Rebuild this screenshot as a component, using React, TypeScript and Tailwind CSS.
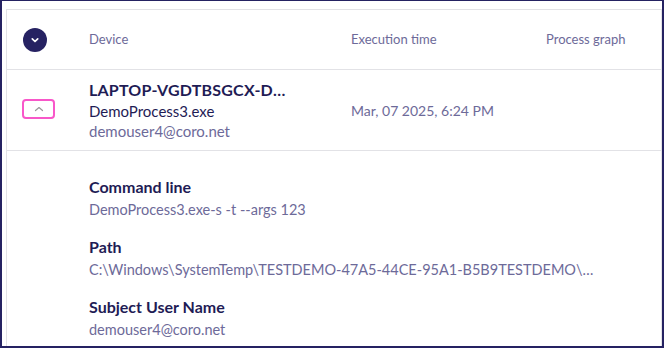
import React from "react";

const font = { fontFamily: "Lato, 'Noto Sans', sans-serif" };

export default function App() {
  return (
    <div
      className="w-[664px] h-[348px] overflow-hidden bg-white border-t border-l-2 border-r-2 border-b-2 border-[#252262] pl-[4px] pt-[8px]"
      style={font}
    >
      <div className="w-[656px] h-[400px] border border-[#e2e2e6]">
        {/* header */}
        <div className="flex items-center h-[60px] border-b border-[#e2e2e6]">
          <div className="w-[82px] flex pl-[16px] pt-[1px]">
            <div className="w-6 h-6 rounded-full bg-[#262262] flex items-center justify-center">
              <svg width="10" height="10" viewBox="0 0 10 10">
                <path d="M2.3 3.8 L5 6.5 L7.7 3.8" fill="none" stroke="white" strokeWidth="1.7" strokeLinecap="round" strokeLinejoin="round" />
              </svg>
            </div>
          </div>
          <div className="w-[262px] text-[13px] text-[#6d6a99]">Device</div>
          <div className="w-[195px] text-[13px] text-[#6d6a99]">Execution time</div>
          <div className="text-[13px] text-[#6d6a99]">Process graph</div>
        </div>
        {/* row */}
        <div className="flex items-center h-[81px] border-b border-[#e2e2e6]">
          <div className="w-[82px] flex pl-[15px] pb-[2px]">
            <div className="w-[33px] h-[20px] rounded-[4px] border-2 border-[#f857c9] flex items-center justify-center">
              <svg width="12" height="8" viewBox="0 0 12 8">
                <path d="M2.5 5.5 L6 2.5 L9.5 5.5" fill="none" stroke="#9a9a9a" strokeWidth="1.2" strokeLinecap="round" strokeLinejoin="round" />
              </svg>
            </div>
          </div>
          <div className="w-[262px] flex flex-col pr-[64px]">
            <div className="text-[16px] font-bold text-[#1f1c55] truncate leading-[22px] tracking-[0.2px]">LAPTOP-VGDTBSGCX-DESKTOP</div>
            <div className="text-[15px] text-[#1f1c55] leading-[20px]">DemoProcess3.exe</div>
            <div className="text-[15px] text-[#6d6a99] leading-[20px]">demouser4@coro.net</div>
          </div>
          <div className="text-[14px] text-[#6d6a99]">Mar, 07 2025, 6:24 PM</div>
        </div>
        {/* details */}
        <div className="pl-[82px] pt-[25px] flex flex-col gap-[15px]">
          <div className="flex flex-col">
            <div className="text-[16px] font-bold text-[#1f1c55] leading-[22px]">Command line</div>
            <div className="text-[14.5px] text-[#6d6a99] leading-[23px]">DemoProcess3.exe-s -t --args 123</div>
          </div>
          <div className="flex flex-col">
            <div className="text-[16px] font-bold text-[#1f1c55] leading-[22px]">Path</div>
            <div className="w-[506px] text-[14.5px] text-[#6d6a99] leading-[23px] truncate">C:\Windows\SystemTemp\TESTDEMO-47A5-44CE-95A1-B5B9TESTDEMO\DemoProcess3.exe</div>
          </div>
          <div className="flex flex-col">
            <div className="text-[16px] font-bold text-[#1f1c55] leading-[22px]">Subject User Name</div>
            <div className="text-[14.5px] text-[#6d6a99] leading-[23px]">demouser4@coro.net</div>
          </div>
        </div>
      </div>
    </div>
  );
}
